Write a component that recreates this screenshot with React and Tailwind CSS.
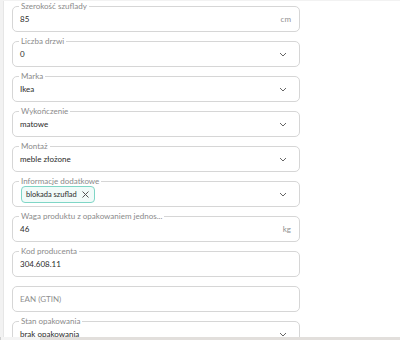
import React from "react";

const Chevron = () => (
  <svg width="8" height="5" viewBox="0 0 8 5" className="shrink-0">
    <path d="M1 1l3 3 3-3" fill="none" stroke="#666" strokeWidth="1" />
  </svg>
);

function Field({ label, children, right }) {
  return (
    <div className="relative h-[26px] w-[288px] shrink-0 rounded-[5px] border border-[#d6d6d6] bg-white flex items-center pl-[7px] pr-[8px]">
      {label && (
        <span className="absolute left-[6px] top-[-6px] bg-white px-[2px] text-[8px] leading-[10px] text-[#8a8a8a] whitespace-nowrap">
          {label}
        </span>
      )}
      <div className="flex-1 min-w-0 flex items-center">{children}</div>
      {right}
    </div>
  );
}

const Val = ({ children }) => (
  <span className="text-[8px] leading-[10px] text-[#2b2b2b]">{children}</span>
);

const Unit = ({ children }) => (
  <span className="text-[8px] leading-[10px] text-[#8f8f8f]">{children}</span>
);

export default function App() {
  return (
    <div
      className="h-[340px] w-[400px] flex flex-col bg-[#f2f2f2] overflow-hidden"
      style={{ fontFamily: 'Lato, "Open Sans", "Liberation Sans", sans-serif' }}
    >
      <div className="flex-1 min-h-0 ml-[3px] mt-[1px] bg-white border-l border-[#e6e6e6] overflow-hidden">
        <div className="flex flex-col gap-[9px] pl-[8px] pt-[5px]">
          <Field label="Szerokość szuflady" right={<Unit>cm</Unit>}>
            <Val>85</Val>
          </Field>
          <Field label="Liczba drzwi" right={<span className="pr-[4px]"><Chevron /></span>}>
            <Val>0</Val>
          </Field>
          <Field label="Marka" right={<span className="pr-[4px]"><Chevron /></span>}>
            <Val>Ikea</Val>
          </Field>
          <Field label="Wykończenie" right={<span className="pr-[4px]"><Chevron /></span>}>
            <Val>matowe</Val>
          </Field>
          <Field label="Montaż" right={<span className="pr-[4px]"><Chevron /></span>}>
            <Val>meble złożone</Val>
          </Field>
          <Field label="Informacje dodatkowe" right={<span className="pr-[4px]"><Chevron /></span>}>
            <span className="flex items-center gap-[5px] h-[17px] rounded-[4px] border border-[#7fd6c6] bg-[#f1fbf9] pl-[4px] pr-[5px] ml-[1px]">
              <span className="text-[7.5px] leading-[9px] text-[#2b2b2b]">blokada szuflad</span>
              <svg width="7" height="7" viewBox="0 0 7 7">
                <path d="M0.5 0.5l6 6M6.5 0.5l-6 6" stroke="#555" strokeWidth="1" />
              </svg>
            </span>
          </Field>
          <Field label="Waga produktu z opakowaniem jednos..." right={<Unit>kg</Unit>}>
            <Val>46</Val>
          </Field>
          <Field label="Kod producenta">
            <Val>304.608.11</Val>
          </Field>
          <Field>
            <span className="text-[8px] leading-[10px] text-[#8f8f8f]">EAN (GTIN)</span>
          </Field>
          <Field label="Stan opakowania" right={<span className="pr-[4px]"><Chevron /></span>}>
            <Val>brak opakowania</Val>
          </Field>
        </div>
      </div>
      <div className="h-[3px] shrink-0 flex bg-[#e2dfdc]">
        <div className="w-[40px] bg-[#f4f4f4] border-l border-[#cfcfcf]" />
      </div>
    </div>
  );
}
